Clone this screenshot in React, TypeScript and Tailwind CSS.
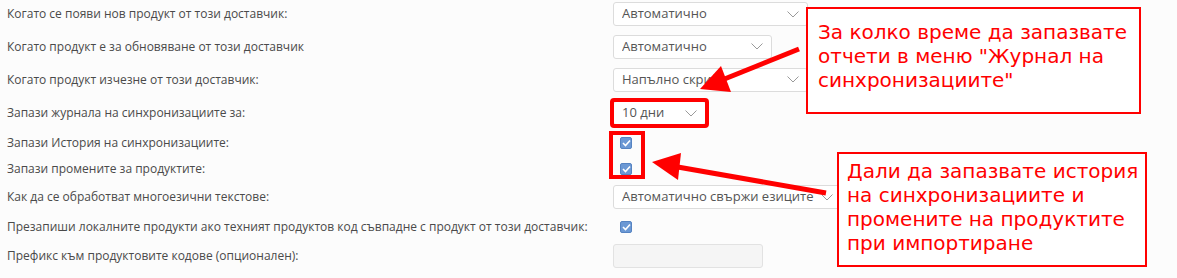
import type { ReactNode } from "react";

const label = "pl-[7px] w-[613px] shrink-0 text-[12px] text-[#4a4a4a]";

function Chevron() {
  return (
    <svg width="12" height="7" viewBox="0 0 12 7" className="shrink-0">
      <polyline points="0.5,0.5 6,6 11.5,0.5" fill="none" stroke="#9a9a9a" strokeWidth="1" />
    </svg>
  );
}

function Select({ value, width }: { value: string; width: string }) {
  return (
    <div
      className={`flex h-[24px] items-center justify-between rounded-[3px] border border-[#dcdcdc] bg-white pl-[8px] pr-[8px] text-[13px] text-[#555] ${width}`}
    >
      <span className="truncate">{value}</span>
      <Chevron />
    </div>
  );
}

function Check() {
  return (
    <span className="ml-[7px] flex size-[12px] items-center justify-center rounded-[2px] border border-[#5583c2] bg-[#6b98d4]">
      <svg width="9" height="8" viewBox="0 0 9 8">
        <polyline points="1,4 3.5,6.5 8,1.5" fill="none" stroke="#fff" strokeWidth="1.6" />
      </svg>
    </span>
  );
}

function Row({ text, h, children }: { text: string; h: string; children?: ReactNode }) {
  return (
    <div className={`flex items-center ${h}`}>
      <div className={label}>{text}</div>
      {children}
    </div>
  );
}

export default function App() {
  return (
    <div className="relative h-[278px] w-[1177px] overflow-hidden bg-[#fcfcfc] font-['Open_Sans',sans-serif]">
      <div className="flex flex-col">
        <Row text="Когато се появи нов продукт от този доставчик:" h="h-[28px]">
          <Select value="Автоматично" width="w-[195px]" />
        </Row>
        <Row text="Когато продукт е за обновяване от този доставчик" h="h-[37px]">
          <Select value="Автоматично" width="w-[159px]" />
        </Row>
        <Row text="Когато продукт изчезне от този доставчик:" h="h-[29px]">
          <Select value="Напълно скрий" width="w-[195px]" />
        </Row>
        <Row text="Запази журнала на синхронизациите за:" h="h-[38px]">
          <div className="rounded-[1px] outline-[4px] outline-[#ff0000] outline-offset-[-1px]">
            <Select value="10 дни" width="w-[93px]" />
          </div>
        </Row>
        <Row text="Запази История на синхронизациите:" h="h-[22px]">
          <Check />
        </Row>
        <Row text="Запази промените за продуктите:" h="h-[30px]">
          <Check />
        </Row>
        <Row text="Как да се обработват многоезични текстове:" h="h-[26px]">
          <Select value="Автоматично свържи езиците" width="w-[229px]" />
        </Row>
        <Row text="Презапиши локалните продукти ако техният продуктов код съвпадне с продукт от този доставчик:" h="h-[34px]">
          <Check />
        </Row>
        <Row text="Префикс към продуктовите кодове (опционален):" h="h-[24px]">
          <div className="h-[24px] w-[150px] rounded-[3px] border border-[#e2e2e2] bg-[#f5f5f5]" />
        </Row>
      </div>

      {/* red frame round the two checkboxes */}
      <div className="absolute left-[609px] top-[131px] h-[48px] w-[36px] border-[4px] border-[#ff0000]" />

      {/* arrows */}
      <svg className="pointer-events-none absolute left-0 top-0" width="1177" height="278">
        <line x1="799" y1="49" x2="722" y2="80" stroke="#ff0000" strokeWidth="5" />
        <polygon points="700,89 721,66 731,92" fill="#ff0000" />
        <line x1="826" y1="193" x2="672" y2="166" stroke="#ff0000" strokeWidth="5" />
        <polygon points="652,162 681,153 678,180" fill="#ff0000" />
      </svg>

      {/* notes */}
      <div className="absolute left-[806px] top-[7px] h-[107px] w-[335px] border-2 border-[#ff0000] bg-white pl-[10px] pt-[11px] font-['DejaVu_Sans',sans-serif] text-[20px] leading-[24px] text-[#ff0000]">
        За колко време да запазвате
        <br />
        отчети в меню "Журнал на
        <br />
        синхронизациите"
      </div>
      <div className="absolute left-[837px] top-[152px] h-[115px] w-[310px] border-2 border-[#ff0000] bg-white pl-[8px] pt-[5px] font-['DejaVu_Sans',sans-serif] text-[20px] leading-[24px] text-[#ff0000]">
        Дали да запазвате история
        <br />
        на синхронизациите и
        <br />
        промените на продуктите
        <br />
        при импортиране
      </div>
    </div>
  );
}
